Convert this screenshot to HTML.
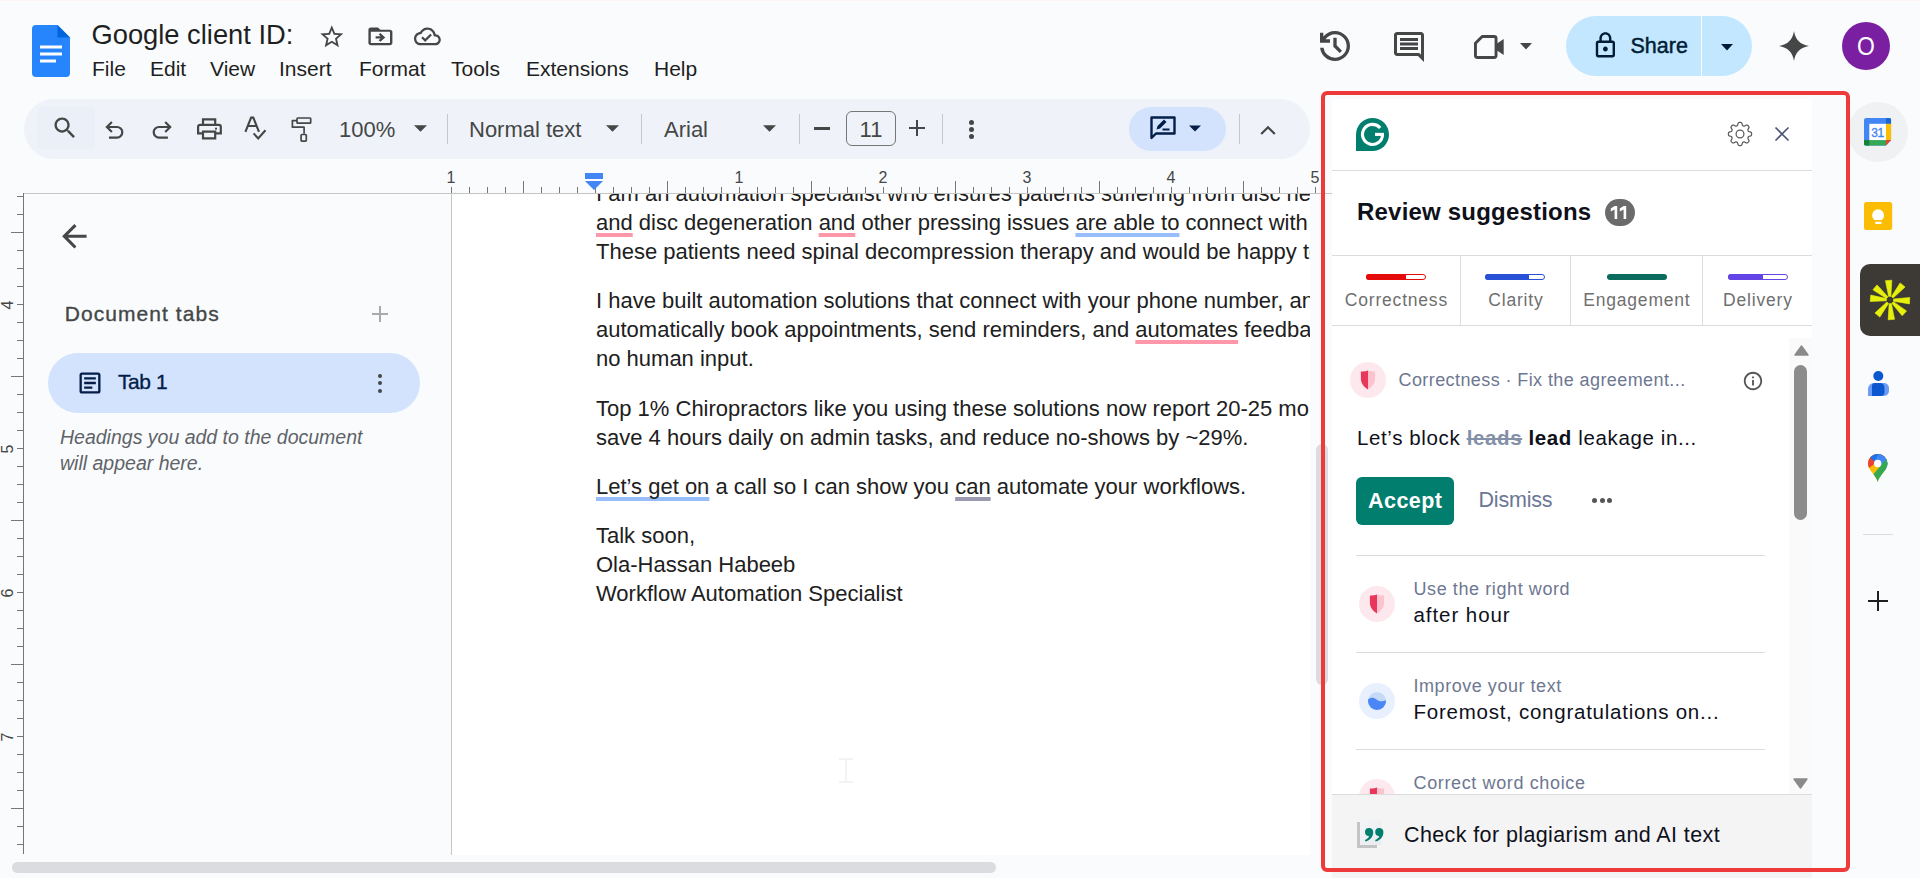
<!DOCTYPE html>
<html><head><meta charset="utf-8">
<style>
*{margin:0;padding:0;box-sizing:border-box}
html,body{width:1920px;height:878px;overflow:hidden;background:#f9fbfd;font-family:"Liberation Sans",sans-serif;color:#1f1f1f}
.a{position:absolute}
.t{position:absolute;white-space:nowrap;line-height:1}
svg{position:absolute;overflow:visible}
.ic{fill:#444746}
.dl{position:absolute;left:144px;white-space:nowrap;line-height:1;font-size:22px;color:#202020;font-family:"Liberation Sans",sans-serif}
.up,.ub,.ug{text-decoration:underline;text-decoration-thickness:3.7px;text-underline-offset:3.4px;text-decoration-skip-ink:none}
.up{text-decoration-color:#ff97aa}.ub{text-decoration-color:#97bdfa}.ug{text-decoration-color:#9a9ab0}
.gtab{position:absolute;top:292.2px;text-align:center;font-size:17.5px;letter-spacing:0.8px;text-indent:0.8px;color:#6f6f6f}
.gsub{font-size:18px;color:#6d7791}
.gmain{font-size:20.5px;color:#0e101a}
</style></head><body>
<div class="a" style="left:0;top:0;width:1920px;height:1px;background:#fdf4f1"></div>

<!-- ===== HEADER ===== -->
<svg style="left:32px;top:25px" width="38" height="52" viewBox="0 0 38 52">
<path d="M4 0h21.5l12.5 12.5v35.5a4 4 0 0 1-4 4H4a4 4 0 0 1-4-4V4a4 4 0 0 1 4-4z" fill="#2684fc"/>
<path d="M25.5 0l12.5 12.5H25.5z" fill="#0066da"/>
<rect x="8" y="20.5" width="22" height="3" fill="#fff"/>
<rect x="8" y="27.5" width="22" height="3" fill="#fff"/>
<rect x="8" y="34.5" width="16" height="3" fill="#fff"/>
</svg>
<div class="t" id="title" style="left:91.5px;top:21.2px;font-size:27.3px;color:#1f1f1f">Google client ID:</div>
<!-- star -->
<svg style="left:318px;top:22.7px" width="27.6" height="27.6" viewBox="0 0 24 24"><path class="ic" d="M22 9.24l-7.19-.62L12 2 9.19 8.63 2 9.24l5.46 4.73L5.82 21 12 17.27 18.18 21l-1.63-7.03L22 9.24zM12 15.4l-3.76 2.27 1-4.28-3.32-2.88 4.38-.38L12 6.1l1.71 4.04 4.38.38-3.32 2.88 1 4.28L12 15.4z"/></svg>
<!-- folder move -->
<svg style="left:365.6px;top:22.6px" width="28.8" height="26.6" viewBox="0 0 24 24" preserveAspectRatio="none"><path class="ic" d="M20 6h-8l-2-2H4c-1.1 0-1.99.9-1.99 2L2 18c0 1.1.9 2 2 2h16c1.1 0 2-.9 2-2V8c0-1.1-.9-2-2-2zm0 12H4V8h16v10zm-7.84-6H8v2h4.16l-1.59 1.59L11.98 17 16 13l-4.02-4-1.41 1.41L12.16 12z"/></svg>
<!-- cloud done -->
<svg style="left:414.4px;top:22.6px" width="26.8" height="26.8" viewBox="0 0 24 24"><path class="ic" d="M19.35 10.04C18.67 6.59 15.64 4 12 4 9.11 4 6.6 5.64 5.35 8.04 2.34 8.36 0 10.91 0 14c0 3.31 2.69 6 6 6h13c2.76 0 5-2.240 5-5 0-2.64-2.05-4.78-4.65-4.96zM19 18H6c-2.21 0-4-1.79-4-4 0-2.05 1.53-3.76 3.56-3.97l1.07-.11.5-.95C8.08 7.14 9.94 6 12 6c2.62 0 4.88 1.86 5.39 4.43l.3 1.5 1.53.11c1.56.1 2.78 1.41 2.780 2.96 0 1.65-1.35 3-3 3zm-9-3.82l-2.09-2.09L6.5 13.5 10 17l6.01-6.01-1.41-1.41z"/></svg>

<!-- menu -->
<div class="t menu" style="left:92px;top:57.6px;font-size:21px">File</div>
<div class="t menu" style="left:150px;top:57.6px;font-size:21px">Edit</div>
<div class="t menu" style="left:210px;top:57.6px;font-size:21px">View</div>
<div class="t menu" style="left:279px;top:57.6px;font-size:21px">Insert</div>
<div class="t menu" style="left:359px;top:57.6px;font-size:21px">Format</div>
<div class="t menu" style="left:451px;top:57.6px;font-size:21px">Tools</div>
<div class="t menu" style="left:526px;top:57.6px;font-size:21px">Extensions</div>
<div class="t menu" style="left:654px;top:57.6px;font-size:21px">Help</div>

<!-- right header icons -->
<!-- history -->
<svg style="left:1315px;top:26px" width="40" height="40" viewBox="0 0 24 24"><path class="ic" d="M12 21c-2.3 0-4.3-.76-6-2.28C4.3 17.2 3.32 15.3 3.05 13H5.1a6.9 6.9 0 0 0 2.3 4.3A6.9 6.9 0 0 0 12 19c1.95 0 3.6-.68 4.96-2.04C18.320 15.6 19 13.95 19 12s-.68-3.6-2.04-4.96C15.6 5.68 13.95 5 12 5a6.7 6.7 0 0 0-3.2.8A7.4 7.4 0 0 0 6.3 8H9v2H3V4h2v2.35a8.7 8.7 0 0 1 3.1-2.47A8.8 8.8 0 0 1 12 3c1.25 0 2.42.24 3.5.71a9.1 9.1 0 0 1 2.86 1.93 9.1 9.1 0 0 1 1.93 2.86c.47 1.08.71 2.25.71 3.5s-.24 2.42-.71 3.5a9.1 9.1 0 0 1-1.930 2.86 9.1 9.1 0 0 1-2.86 1.93A8.8 8.8 0 0 1 12 21zm2.8-4.8L11 12.4V7h2v4.6l3.2 3.2-1.4 1.4z"/></svg>
<!-- comment -->
<svg style="left:1391px;top:29px" width="36" height="36" viewBox="0 0 24 24"><path class="ic" d="M21.99 4c0-1.1-.89-2-1.99-2H4c-1.1 0-2 .9-2 2v12c0 1.1.9 2 2 2h14l4 4-.01-18zM20 4v13.17L18.83 16H4V4h16zM6 12h12v2H6zm0-3h12v2H6zm0-3h12v2H6z"/></svg>
<!-- meet -->
<svg style="left:1474.3px;top:35px" width="30" height="24" viewBox="0 0 30 24"><path fill="none" stroke="#444746" stroke-width="2.9" stroke-linejoin="round" d="M8.2 1.45H20.05a2 2 0 0 1 2 2V20.55a2 2 0 0 1-2 2H3.45a2 2 0 0 1-2-2V8.2z"/><path fill="#444746" d="M23 8.5L29.7 4V20L23 15.5z"/></svg>
<svg style="left:1520px;top:42.5px" width="12" height="7" viewBox="0 0 12 7"><path d="M0 0h12L6 6.5z" fill="#444746"/></svg>

<!-- share -->
<div class="a" style="left:1566px;top:16px;width:186px;height:60px;border-radius:30px;background:#c2e7ff"></div>
<div class="a" style="left:1701px;top:16px;width:1px;height:60px;background:#f9fbfd"></div>
<svg style="left:1590.5px;top:31px" width="28.8" height="28.8" viewBox="0 0 24 24"><path fill="#001d35" d="M18 8h-1V6c0-2.76-2.24-5-5-5S7 3.24 7 6v2H6c-1.1 0-2 .9-2 2v10c0 1.1.9 2 2 2h12c1.1 0 2-.9 2-2V10c0-1.1-.9-2-2-2zM9 6c0-1.66 1.34-3 3-3s3 1.34 3 3v2H9V6zm9 14H6V10h12v10zm-6-3c1.1 0 2-.9 2-2s-.9-2-2-2-2 .9-2 2 .9 2 2 2z"/></svg>
<div class="t" id="share" style="left:1630.5px;top:36px;font-size:21.5px;color:#001d35;-webkit-text-stroke:0.45px #001d35">Share</div>
<svg style="left:1721px;top:43.5px" width="12" height="7" viewBox="0 0 12 7"><path d="M0 0h12L6 6.5z" fill="#001d35"/></svg>
<!-- gemini -->
<svg style="left:1779px;top:31px" width="30" height="30" viewBox="0 0 30 30"><path fill="#444746" d="M15 0C16.2 8.5 21.5 13.8 30 15 21.5 16.2 16.2 21.5 15 30 13.8 21.5 8.5 16.2 0 15 8.5 13.8 13.8 8.5 15 0z"/></svg>
<!-- avatar -->
<div class="a" style="left:1842px;top:22px;width:48px;height:48px;border-radius:24px;background:#7b1fa2"></div>
<div class="t" style="left:1842px;top:33.2px;width:48px;text-align:center;font-size:26px;color:#fff;transform:scaleX(0.88)">O</div>

<!-- ===== RULERS ===== -->
<div class="a" id="page" style="left:452px;top:194px;width:858px;height:661px;background:#fff;overflow:hidden">
<div class="dl" style="top:-11.02px">I am an automation specialist who ensures patients suffering from disc herniation</div>
<div class="dl" style="top:18.08px"><span class="up">and</span> disc degeneration <span class="up">and</span> other pressing issues <span class="ub">are able to</span> connect with you.</div>
<div class="dl" style="top:47.18px">These patients need spinal decompression therapy and would be happy to book</div>
<div class="dl" style="top:96.18px">I have built automation solutions that connect with your phone number, and</div>
<div class="dl" style="top:125.28px">automatically book appointments, send reminders, and <span class="up">automates</span> feedback with</div>
<div class="dl" style="top:154.38px">no human input.</div>
<div class="dl" style="top:203.68px">Top 1% Chiropractors like you using these solutions now report 20-25 more</div>
<div class="dl" style="top:232.78px">save 4 hours daily on admin tasks, and reduce no-shows by ~29%.</div>
<div class="dl" style="top:281.78px"><span class="ub">Let’s get on</span> a call so I can show you <span class="ug">can</span> automate your workflows.</div>
<div class="dl" style="top:330.68px">Talk soon,</div>
<div class="dl" style="top:359.78px">Ola-Hassan Habeeb</div>
<div class="dl" style="top:388.88px">Workflow Automation Specialist</div>
</div>
<div class="a" style="left:451px;top:194px;width:1px;height:661px;background:#c4c7c5"></div>
<div class="a" style="left:23px;top:193px;width:1309px;height:1px;background:#c4c7c5"></div>
<div class="a" style="left:451px;top:187px;width:1px;height:6px;background:#747775"></div>
<div class="a" style="left:469px;top:187px;width:1px;height:6px;background:#747775"></div>
<div class="a" style="left:487px;top:187px;width:1px;height:6px;background:#747775"></div>
<div class="a" style="left:505px;top:187px;width:1px;height:6px;background:#747775"></div>
<div class="a" style="left:523px;top:181px;width:1px;height:12px;background:#747775"></div>
<div class="a" style="left:541px;top:187px;width:1px;height:6px;background:#747775"></div>
<div class="a" style="left:559px;top:187px;width:1px;height:6px;background:#747775"></div>
<div class="a" style="left:577px;top:187px;width:1px;height:6px;background:#747775"></div>
<div class="a" style="left:595px;top:187px;width:1px;height:6px;background:#747775"></div>
<div class="a" style="left:613px;top:187px;width:1px;height:6px;background:#747775"></div>
<div class="a" style="left:631px;top:187px;width:1px;height:6px;background:#747775"></div>
<div class="a" style="left:649px;top:187px;width:1px;height:6px;background:#747775"></div>
<div class="a" style="left:667px;top:181px;width:1px;height:12px;background:#747775"></div>
<div class="a" style="left:685px;top:187px;width:1px;height:6px;background:#747775"></div>
<div class="a" style="left:703px;top:187px;width:1px;height:6px;background:#747775"></div>
<div class="a" style="left:721px;top:187px;width:1px;height:6px;background:#747775"></div>
<div class="a" style="left:739px;top:187px;width:1px;height:6px;background:#747775"></div>
<div class="a" style="left:757px;top:187px;width:1px;height:6px;background:#747775"></div>
<div class="a" style="left:775px;top:187px;width:1px;height:6px;background:#747775"></div>
<div class="a" style="left:793px;top:187px;width:1px;height:6px;background:#747775"></div>
<div class="a" style="left:811px;top:181px;width:1px;height:12px;background:#747775"></div>
<div class="a" style="left:829px;top:187px;width:1px;height:6px;background:#747775"></div>
<div class="a" style="left:847px;top:187px;width:1px;height:6px;background:#747775"></div>
<div class="a" style="left:865px;top:187px;width:1px;height:6px;background:#747775"></div>
<div class="a" style="left:883px;top:187px;width:1px;height:6px;background:#747775"></div>
<div class="a" style="left:901px;top:187px;width:1px;height:6px;background:#747775"></div>
<div class="a" style="left:919px;top:187px;width:1px;height:6px;background:#747775"></div>
<div class="a" style="left:937px;top:187px;width:1px;height:6px;background:#747775"></div>
<div class="a" style="left:955px;top:181px;width:1px;height:12px;background:#747775"></div>
<div class="a" style="left:973px;top:187px;width:1px;height:6px;background:#747775"></div>
<div class="a" style="left:991px;top:187px;width:1px;height:6px;background:#747775"></div>
<div class="a" style="left:1009px;top:187px;width:1px;height:6px;background:#747775"></div>
<div class="a" style="left:1027px;top:187px;width:1px;height:6px;background:#747775"></div>
<div class="a" style="left:1045px;top:187px;width:1px;height:6px;background:#747775"></div>
<div class="a" style="left:1063px;top:187px;width:1px;height:6px;background:#747775"></div>
<div class="a" style="left:1081px;top:187px;width:1px;height:6px;background:#747775"></div>
<div class="a" style="left:1099px;top:181px;width:1px;height:12px;background:#747775"></div>
<div class="a" style="left:1117px;top:187px;width:1px;height:6px;background:#747775"></div>
<div class="a" style="left:1135px;top:187px;width:1px;height:6px;background:#747775"></div>
<div class="a" style="left:1153px;top:187px;width:1px;height:6px;background:#747775"></div>
<div class="a" style="left:1171px;top:187px;width:1px;height:6px;background:#747775"></div>
<div class="a" style="left:1189px;top:187px;width:1px;height:6px;background:#747775"></div>
<div class="a" style="left:1207px;top:187px;width:1px;height:6px;background:#747775"></div>
<div class="a" style="left:1225px;top:187px;width:1px;height:6px;background:#747775"></div>
<div class="a" style="left:1243px;top:181px;width:1px;height:12px;background:#747775"></div>
<div class="a" style="left:1261px;top:187px;width:1px;height:6px;background:#747775"></div>
<div class="a" style="left:1279px;top:187px;width:1px;height:6px;background:#747775"></div>
<div class="a" style="left:1297px;top:187px;width:1px;height:6px;background:#747775"></div>
<div class="a" style="left:1315px;top:187px;width:1px;height:6px;background:#747775"></div>
<div class="t rl" style="left:436px;top:170.2px;width:30px;text-align:center;font-size:16px;color:#444746">1</div>
<div class="t rl" style="left:724px;top:170.2px;width:30px;text-align:center;font-size:16px;color:#444746">1</div>
<div class="t rl" style="left:868px;top:170.2px;width:30px;text-align:center;font-size:16px;color:#444746">2</div>
<div class="t rl" style="left:1012px;top:170.2px;width:30px;text-align:center;font-size:16px;color:#444746">3</div>
<div class="t rl" style="left:1156px;top:170.2px;width:30px;text-align:center;font-size:16px;color:#444746">4</div>
<div class="t rl" style="left:1300px;top:170.2px;width:30px;text-align:center;font-size:16px;color:#444746">5</div>
<div class="a" style="left:23px;top:193px;width:1px;height:661px;background:#747775"></div>
<div class="a" style="left:17px;top:196px;width:6px;height:1px;background:#747775"></div>
<div class="a" style="left:17px;top:214px;width:6px;height:1px;background:#747775"></div>
<div class="a" style="left:11px;top:232px;width:12px;height:1px;background:#747775"></div>
<div class="a" style="left:17px;top:250px;width:6px;height:1px;background:#747775"></div>
<div class="a" style="left:17px;top:268px;width:6px;height:1px;background:#747775"></div>
<div class="a" style="left:17px;top:286px;width:6px;height:1px;background:#747775"></div>
<div class="a" style="left:17px;top:304px;width:6px;height:1px;background:#747775"></div>
<div class="a" style="left:17px;top:322px;width:6px;height:1px;background:#747775"></div>
<div class="a" style="left:17px;top:340px;width:6px;height:1px;background:#747775"></div>
<div class="a" style="left:17px;top:358px;width:6px;height:1px;background:#747775"></div>
<div class="a" style="left:11px;top:376px;width:12px;height:1px;background:#747775"></div>
<div class="a" style="left:17px;top:394px;width:6px;height:1px;background:#747775"></div>
<div class="a" style="left:17px;top:412px;width:6px;height:1px;background:#747775"></div>
<div class="a" style="left:17px;top:430px;width:6px;height:1px;background:#747775"></div>
<div class="a" style="left:17px;top:448px;width:6px;height:1px;background:#747775"></div>
<div class="a" style="left:17px;top:466px;width:6px;height:1px;background:#747775"></div>
<div class="a" style="left:17px;top:484px;width:6px;height:1px;background:#747775"></div>
<div class="a" style="left:17px;top:502px;width:6px;height:1px;background:#747775"></div>
<div class="a" style="left:11px;top:520px;width:12px;height:1px;background:#747775"></div>
<div class="a" style="left:17px;top:538px;width:6px;height:1px;background:#747775"></div>
<div class="a" style="left:17px;top:556px;width:6px;height:1px;background:#747775"></div>
<div class="a" style="left:17px;top:574px;width:6px;height:1px;background:#747775"></div>
<div class="a" style="left:17px;top:592px;width:6px;height:1px;background:#747775"></div>
<div class="a" style="left:17px;top:610px;width:6px;height:1px;background:#747775"></div>
<div class="a" style="left:17px;top:628px;width:6px;height:1px;background:#747775"></div>
<div class="a" style="left:17px;top:646px;width:6px;height:1px;background:#747775"></div>
<div class="a" style="left:11px;top:664px;width:12px;height:1px;background:#747775"></div>
<div class="a" style="left:17px;top:682px;width:6px;height:1px;background:#747775"></div>
<div class="a" style="left:17px;top:700px;width:6px;height:1px;background:#747775"></div>
<div class="a" style="left:17px;top:718px;width:6px;height:1px;background:#747775"></div>
<div class="a" style="left:17px;top:736px;width:6px;height:1px;background:#747775"></div>
<div class="a" style="left:17px;top:754px;width:6px;height:1px;background:#747775"></div>
<div class="a" style="left:17px;top:772px;width:6px;height:1px;background:#747775"></div>
<div class="a" style="left:17px;top:790px;width:6px;height:1px;background:#747775"></div>
<div class="a" style="left:11px;top:808px;width:12px;height:1px;background:#747775"></div>
<div class="a" style="left:17px;top:826px;width:6px;height:1px;background:#747775"></div>
<div class="a" style="left:17px;top:844px;width:6px;height:1px;background:#747775"></div>
<div class="t rl" style="left:-7px;top:297px;width:30px;height:16px;text-align:center;font-size:16px;color:#444746;transform:rotate(-90deg)">4</div>
<div class="t rl" style="left:-7px;top:441px;width:30px;height:16px;text-align:center;font-size:16px;color:#444746;transform:rotate(-90deg)">5</div>
<div class="t rl" style="left:-7px;top:585px;width:30px;height:16px;text-align:center;font-size:16px;color:#444746;transform:rotate(-90deg)">6</div>
<div class="t rl" style="left:-7px;top:729px;width:30px;height:16px;text-align:center;font-size:16px;color:#444746;transform:rotate(-90deg)">7</div>
<div class="a" style="left:585px;top:173px;width:18px;height:5.5px;background:#4285f4"></div>
<svg style="left:585px;top:181px" width="18" height="9" viewBox="0 0 18 9"><path d="M0 0h18L9 9z" fill="#4285f4"/></svg>
<!-- ===== LEFT SIDEBAR ===== -->
<svg style="left:55.8px;top:218.3px" width="36.7" height="36.7" viewBox="0 0 24 24"><path class="ic" d="M20 11H7.83l5.59-5.59L12 4l-8 8 8 8 1.41-1.41L7.83 13H20v-2z"/></svg>
<div class="t" id="doctabs" style="left:64.8px;top:303px;font-size:21px;letter-spacing:1.05px;color:#444746;-webkit-text-stroke:0.35px #444746">Document tabs</div>
<div class="a" style="left:372px;top:313.2px;width:16px;height:1.8px;background:#a8abae"></div>
<div class="a" style="left:379.1px;top:306px;width:1.8px;height:16px;background:#a8abae"></div>
<div class="a" style="left:48px;top:352.8px;width:372px;height:60px;border-radius:30px;background:#d3e3fd"></div>
<svg style="left:76px;top:369.1px" width="28" height="28" viewBox="0 0 24 24"><path fill="#041e49" d="M19 5v14H5V5h14m0-2H5c-1.1 0-2 .9-2 2v14c0 1.1.9 2 2 2h14c1.1 0 2-.9 2-2V5c0-1.1-.9-2-2-2zM14 17H7v-2h7v2zm3-4H7v-2h10v2zm0-4H7V7h10v2z"/></svg>
<div class="t" id="tab1" style="left:118px;top:371.2px;font-size:21px;letter-spacing:-0.45px;color:#041e49;-webkit-text-stroke:0.35px #041e49">Tab 1</div>
<div class="a" style="left:377.5px;top:373.5px;width:4px;height:4px;border-radius:50%;background:#444746"></div>
<div class="a" style="left:377.5px;top:381px;width:4px;height:4px;border-radius:50%;background:#444746"></div>
<div class="a" style="left:377.5px;top:388.5px;width:4px;height:4px;border-radius:50%;background:#444746"></div>
<div class="t" id="head1" style="left:60px;top:428px;font-size:19.5px;font-style:italic;color:#5f6368">Headings you add to the document</div>
<div class="t" id="head2" style="left:60px;top:453.6px;font-size:19.5px;font-style:italic;color:#5f6368">will appear here.</div>
<!-- ===== TOOLBAR ===== -->
<div class="a" style="left:24px;top:99px;width:1286px;height:60px;border-radius:30px;background:#eff3f9"></div>
<div class="a" style="left:38px;top:107px;width:57px;height:42px;background:#ebf0f8;border-radius:2px"></div>


<!-- search -->
<svg style="left:50.5px;top:113.5px" width="28" height="28" viewBox="0 0 24 24"><path class="ic" d="M15.5 14h-.79l-.28-.27C15.41 12.59 16 11.11 16 9.5 16 5.91 13.09 3 9.5 3S3 5.91 3 9.5 5.91 16 9.5 16c1.61 0 3.09-.59 4.23-1.57l.27.28v.79l5 4.99L20.49 19l-4.99-5zm-6 0C7.01 14 5 11.99 5 9.5S7.01 5 9.5 5 14 7.01 14 9.5 11.99 14 9.5 14z"/></svg>
<!-- undo -->
<svg style="left:104px;top:120px" width="22" height="22" viewBox="0 0 22 22"><path fill="none" stroke="#444746" stroke-width="2.2" stroke-linejoin="miter" d="M7.9 2L2.9 7 7.9 12M2.9 7H13A5.3 5.3 0 0 1 13 17.6H5"/></svg>
<!-- redo -->
<svg style="left:150px;top:120px" width="22" height="22" viewBox="0 0 22 22"><path fill="none" stroke="#444746" stroke-width="2.2" stroke-linejoin="miter" d="M15.2 2L20.2 7 15.2 12M20.2 7H9A5.3 5.3 0 0 0 9 17.6H17.9"/></svg>
<!-- print -->
<svg style="left:196px;top:117px" width="26" height="24" viewBox="0 0 26 24"><g fill="none" stroke="#444746" stroke-width="2.2" stroke-linejoin="miter"><path d="M7 7.8V2.4H19.2V7.8"/><path d="M7 16.3H2.1V9.8a2 2 0 0 1 2-2H22.8a2 2 0 0 1 2 2V16.3H19.2"/><path d="M7 14.7H19.2V21.3H7z"/></g><circle cx="20" cy="11.7" r="1.1" fill="#444746"/></svg>
<!-- spellcheck -->
<svg style="left:244px;top:115px" width="24" height="26" viewBox="0 0 24 26"><path fill="none" stroke="#444746" stroke-width="2.1" d="M1.4 16.8L7.1 2.6H9.3L15 16.8M4.2 11h8M9.6 18.4l4.6 5 7.3-8.2"/></svg>
<!-- paint format -->
<svg style="left:290px;top:116px" width="23" height="27" viewBox="0 0 23 27"><g fill="none" stroke="#444746" stroke-width="1.7" stroke-linejoin="round"><rect x="7" y="2" width="13.7" height="5.2" rx="0.8"/><path d="M7 4.6H2.4V11.2H14.1V17.7"/><rect x="11.1" y="18.5" width="5.2" height="6.6" rx="0.8"/></g></svg>

<div class="t" id="zoom" style="left:339px;top:118.5px;font-size:22px;color:#444746">100%</div>
<svg style="left:414px;top:125px" width="13" height="7" viewBox="0 0 12 6"><path d="M0 0h12L6 6z" fill="#444746"/></svg>
<div class="a" style="left:446.5px;top:114px;width:1px;height:30px;background:#c7c7c7"></div>
<div class="t" id="normal" style="left:469px;top:118.5px;font-size:22px;color:#444746">Normal text</div>
<svg style="left:606px;top:125px" width="13" height="7" viewBox="0 0 12 6"><path d="M0 0h12L6 6z" fill="#444746"/></svg>
<div class="a" style="left:641px;top:114px;width:1px;height:30px;background:#c7c7c7"></div>
<div class="t" id="arial" style="left:664px;top:118.5px;font-size:22px;color:#444746">Arial</div>
<svg style="left:763px;top:125px" width="13" height="7" viewBox="0 0 12 6"><path d="M0 0h12L6 6z" fill="#444746"/></svg>
<div class="a" style="left:798.5px;top:114px;width:1px;height:30px;background:#c7c7c7"></div>
<div class="a" style="left:814px;top:127px;width:16px;height:2.5px;background:#444746"></div>
<div class="a" style="left:846px;top:111px;width:50px;height:35px;border:1.5px solid #747775;border-radius:6px"></div>
<div class="t" id="fs11" style="left:846px;top:118.5px;width:50px;text-align:center;font-size:22px;color:#444746">11</div>
<div class="a" style="left:909px;top:126.7px;width:16px;height:2.6px;background:#444746"></div>
<div class="a" style="left:915.7px;top:120px;width:2.6px;height:16px;background:#444746"></div>
<div class="a" style="left:941.5px;top:114px;width:1px;height:30px;background:#c7c7c7"></div>
<div class="a" style="left:969px;top:119.5px;width:5px;height:5px;border-radius:50%;background:#444746"></div>
<div class="a" style="left:969px;top:126.5px;width:5px;height:5px;border-radius:50%;background:#444746"></div>
<div class="a" style="left:969px;top:133.5px;width:5px;height:5px;border-radius:50%;background:#444746"></div>
<!-- mode pill -->
<div class="a" style="left:1129px;top:107px;width:97px;height:44px;border-radius:22px;background:#d3e3fd"></div>
<svg style="left:1150px;top:116px" width="26" height="24" viewBox="0 0 26 24"><path fill="none" stroke="#041e49" stroke-width="2.4" stroke-linejoin="round" d="M1.5 1.5h23v16H6L1.5 22z"/><path fill="#041e49" d="M6.5 13.5l1-3.5 6.5-6.5 2.5 2.5-6.5 6.5zM12.5 12.5h7v2h-7z"/></svg>
<svg style="left:1189px;top:125px" width="12" height="7" viewBox="0 0 12 6"><path d="M0 0h12L6 6z" fill="#041e49"/></svg>
<div class="a" style="left:1239px;top:114px;width:1px;height:30px;background:#c7c7c7"></div>
<svg style="left:1259px;top:123px" width="18" height="14" viewBox="0 0 18 14"><path fill="none" stroke="#444746" stroke-width="2.2" d="M2.2 11L9 4.2 15.8 11"/></svg>
<!-- ===== RIGHT APPS BAR ===== -->
<div class="a" style="left:1848px;top:102px;width:60px;height:60px;border-radius:50%;background:#eff1f3"></div>
<svg style="left:1864px;top:118.2px" width="27.25" height="27.7" viewBox="0 0 27.25 27.7"><defs><clipPath id="calc"><path d="M2.5 0H24.75A2.5 2.5 0 0 1 27.25 2.5V22.1L21.95 27.7H2.5A2.5 2.5 0 0 1 0 25.2V2.5A2.5 2.5 0 0 1 2.5 0z"/></clipPath></defs><g clip-path="url(#calc)"><rect width="27.25" height="27.7" fill="#4285f4"/><rect x="22" y="0" width="5.25" height="5.8" fill="#1967d2"/><rect x="22" y="5.8" width="5.25" height="16.3" fill="#fbbc04"/><rect x="0" y="22.1" width="22" height="5.6" fill="#34a853"/><rect x="0" y="22.1" width="5.3" height="5.6" fill="#188038"/><path d="M22 22.1H27.25L22 27.7z" fill="#ea4335"/><rect x="5.3" y="5.8" width="16.7" height="16.3" fill="#fff"/></g><text x="13.6" y="18.6" text-anchor="middle" font-family="Liberation Sans" font-size="12" fill="#4285f4" letter-spacing="-0.3" stroke="#4285f4" stroke-width="0.35">31</text></svg>
<svg style="left:1863.7px;top:202px" width="28.2" height="28" viewBox="0 0 28.2 28"><rect width="28.2" height="28" rx="2.5" fill="#fbbc04"/><path d="M10.3 18A6 6 0 1 1 17.9 18z" fill="#fff"/><rect x="11.3" y="19.7" width="6.2" height="2.3" fill="#fff"/></svg>
<div class="a" style="left:1860px;top:264px;width:70px;height:72px;border-radius:10px;background:#3d3a36"></div>
<svg style="left:1862px;top:272px" width="56" height="56" viewBox="-28 -28 56 56"><g fill="#e6f00a" stroke="#e6f00a" stroke-width="0.6" stroke-linejoin="round"><path d="M-1.1 -3.6L-3.2 -19.6 3.2 -19.6 1.1 -3.6z" transform="rotate(-4)"/><path d="M-1.1 -3.6L-3.2 -19.6 3.2 -19.6 1.1 -3.6z" transform="rotate(40)"/><path d="M-1.1 -3.6L-3.2 -19.6 3.2 -19.6 1.1 -3.6z" transform="rotate(92)"/><path d="M-1.1 -3.6L-3.2 -19.6 3.2 -19.6 1.1 -3.6z" transform="rotate(133)"/><path d="M-1.1 -3.6L-3.2 -19.6 3.2 -19.6 1.1 -3.6z" transform="rotate(176)"/><path d="M-1.1 -3.6L-3.2 -19.6 3.2 -19.6 1.1 -3.6z" transform="rotate(220)"/><path d="M-1.1 -3.6L-3.2 -19.6 3.2 -19.6 1.1 -3.6z" transform="rotate(275)"/><path d="M-1.1 -3.6L-3.2 -19.6 3.2 -19.6 1.1 -3.6z" transform="rotate(310)"/></g></svg>
<svg style="left:1867.7px;top:371px" width="21" height="25" viewBox="0 0 21 25"><circle cx="10.3" cy="5" r="5" fill="#0b57d0"/><path d="M0 25V18a6 6 0 0 1 6-6H16a5 5 0 0 1 5 5V20a5 5 0 0 1-5 5z" fill="#6c9bf7"/><path d="M4 25V15a3 3 0 0 1 3-3H12a4.5 4.5 0 0 1 4.5 4.5V21a4 4 0 0 1-4 4z" fill="#0b57d0"/></svg>
<svg style="left:1868.3px;top:454px" width="19.4" height="28" viewBox="0 0 19.4 28"><defs><clipPath id="pinc"><path d="M9.7 0C4.3 0 0 4.3 0 9.6c0 2.6 1 4.6 2.4 6.6L6 21c1.6 2.2 3 4.3 3.7 7c.7-2.7 2.1-4.8 3.7-7l3.6-4.8c1.4-2 2.4-4 2.4-6.6C19.4 4.3 15.1 0 9.7 0z"/></clipPath><clipPath id="pina"><path d="M-10.8 -7L24 21.8 30 -10H-10.8z"/></clipPath></defs><g clip-path="url(#pinc)"><rect x="-1" y="-1" width="22" height="30" fill="#fbbc04"/><path d="M-11.1 22.3L24.3 -2.3V-10H-11.1z" fill="#ea4335"/><g clip-path="url(#pina)"><rect x="-1" y="-1" width="22" height="30" fill="#1a73e8"/><path d="M17.4 -12.3L3 13.3H30V-12.3z" fill="#4285f4"/></g><path d="M30.2 -9L-6.7 34.8H30z" fill="#34a853"/></g><circle cx="9.7" cy="9.5" r="3.7" fill="#fff"/></svg>
<div class="a" style="left:1863px;top:534px;width:30px;height:1px;background:#dadce0"></div>
<div class="a" style="left:1868px;top:599.8px;width:20px;height:2.4px;background:#1f1f1f"></div>
<div class="a" style="left:1876.8px;top:591px;width:2.4px;height:20px;background:#1f1f1f"></div>

<!-- scrollbars -->
<div class="a" style="left:0;top:855px;width:1320px;height:23px;background:#f9fbfd"></div>
<div class="a" style="left:12px;top:861.5px;width:984px;height:11.5px;border-radius:6px;background:#dadce0"></div>
<div class="a" style="left:1316px;top:444px;width:11.5px;height:241px;border-radius:6px;background:#dadce0"></div>
<!-- I-beam -->
<svg style="left:838px;top:758px" width="16" height="25" viewBox="0 0 16 25"><path d="M1 1h6l1 1 1-1h6M8 2v21M1 24h6l1-1 1 1h6" fill="none" stroke="#f0f0f0" stroke-width="1.6"/></svg>
<!-- ===== GRAMMARLY PANEL ===== -->
<div class="a" style="left:1332px;top:99px;width:480px;height:779px;background:#fff"></div>
<svg style="left:1356px;top:118px" width="33" height="33" viewBox="0 0 33 33"><path d="M0 16.5A16.5 16.5 0 1 1 16.5 33H0z" fill="#027e6f"/><path d="M24.16 9.97A10 10 0 1 0 26.5 16.4" fill="none" stroke="#fff" stroke-width="3.1"/><path d="M19 16.4H28" stroke="#fff" stroke-width="3.1"/></svg>
<svg style="left:1728px;top:122px" width="24" height="24" viewBox="0 0 24 24"><path fill="none" stroke="#5a5a5a" stroke-width="1.25" stroke-linejoin="round" d="M12.00 0.40 L12.23 0.41 L12.45 0.43 L12.68 0.46 L12.90 0.50 L13.13 0.57 L13.34 0.68 L13.54 0.83 L13.73 1.05 L13.90 1.35 L14.04 1.73 L14.16 2.15 L14.27 2.56 L14.37 2.91 L14.48 3.19 L14.61 3.41 L14.74 3.57 L14.88 3.69 L15.03 3.79 L15.18 3.87 L15.34 3.94 L15.50 4.00 L15.66 4.05 L15.84 4.09 L16.03 4.10 L16.23 4.08 L16.47 4.02 L16.75 3.90 L17.07 3.72 L17.44 3.51 L17.82 3.29 L18.18 3.13 L18.52 3.03 L18.81 3.01 L19.06 3.05 L19.28 3.12 L19.49 3.23 L19.68 3.36 L19.86 3.49 L20.03 3.64 L20.20 3.80 L20.36 3.97 L20.51 4.14 L20.64 4.32 L20.77 4.51 L20.88 4.72 L20.95 4.94 L20.99 5.19 L20.97 5.48 L20.87 5.82 L20.71 6.18 L20.49 6.56 L20.28 6.93 L20.10 7.25 L19.98 7.53 L19.92 7.77 L19.90 7.97 L19.91 8.16 L19.95 8.34 L20.00 8.50 L20.06 8.66 L20.13 8.82 L20.21 8.97 L20.31 9.12 L20.43 9.26 L20.59 9.39 L20.81 9.52 L21.09 9.63 L21.44 9.73 L21.85 9.84 L22.27 9.96 L22.65 10.10 L22.95 10.27 L23.17 10.46 L23.32 10.66 L23.43 10.87 L23.50 11.10 L23.54 11.32 L23.57 11.55 L23.59 11.77 L23.60 12.00 L23.59 12.23 L23.57 12.45 L23.54 12.68 L23.50 12.90 L23.43 13.13 L23.32 13.34 L23.17 13.54 L22.95 13.73 L22.65 13.90 L22.27 14.04 L21.85 14.16 L21.44 14.27 L21.09 14.37 L20.81 14.48 L20.59 14.61 L20.43 14.74 L20.31 14.88 L20.21 15.03 L20.13 15.18 L20.06 15.34 L20.00 15.50 L19.95 15.66 L19.91 15.84 L19.90 16.03 L19.92 16.23 L19.98 16.47 L20.10 16.75 L20.28 17.07 L20.49 17.44 L20.71 17.82 L20.87 18.18 L20.97 18.52 L20.99 18.81 L20.95 19.06 L20.88 19.28 L20.77 19.49 L20.64 19.68 L20.51 19.86 L20.36 20.03 L20.20 20.20 L20.03 20.36 L19.86 20.51 L19.68 20.64 L19.49 20.77 L19.28 20.88 L19.06 20.95 L18.81 20.99 L18.52 20.97 L18.18 20.87 L17.82 20.71 L17.44 20.49 L17.07 20.28 L16.75 20.10 L16.47 19.98 L16.23 19.92 L16.03 19.90 L15.84 19.91 L15.66 19.95 L15.50 20.00 L15.34 20.06 L15.18 20.13 L15.03 20.21 L14.88 20.31 L14.74 20.43 L14.61 20.59 L14.48 20.81 L14.37 21.09 L14.27 21.44 L14.16 21.85 L14.04 22.27 L13.90 22.65 L13.73 22.95 L13.54 23.17 L13.34 23.32 L13.13 23.43 L12.90 23.50 L12.68 23.54 L12.45 23.57 L12.23 23.59 L12.00 23.60 L11.77 23.59 L11.55 23.57 L11.32 23.54 L11.10 23.50 L10.87 23.43 L10.66 23.32 L10.46 23.17 L10.27 22.95 L10.10 22.65 L9.96 22.27 L9.84 21.85 L9.73 21.44 L9.63 21.09 L9.52 20.81 L9.39 20.59 L9.26 20.43 L9.12 20.31 L8.97 20.21 L8.82 20.13 L8.66 20.06 L8.50 20.00 L8.34 19.95 L8.16 19.91 L7.97 19.90 L7.77 19.92 L7.53 19.98 L7.25 20.10 L6.93 20.28 L6.56 20.49 L6.18 20.71 L5.82 20.87 L5.48 20.97 L5.19 20.99 L4.94 20.95 L4.72 20.88 L4.51 20.77 L4.32 20.64 L4.14 20.51 L3.97 20.36 L3.80 20.20 L3.64 20.03 L3.49 19.86 L3.36 19.68 L3.23 19.49 L3.12 19.28 L3.05 19.06 L3.01 18.81 L3.03 18.52 L3.13 18.18 L3.29 17.82 L3.51 17.44 L3.72 17.07 L3.90 16.75 L4.02 16.47 L4.08 16.23 L4.10 16.03 L4.09 15.84 L4.05 15.66 L4.00 15.50 L3.94 15.34 L3.87 15.18 L3.79 15.03 L3.69 14.88 L3.57 14.74 L3.41 14.61 L3.19 14.48 L2.91 14.37 L2.56 14.27 L2.15 14.16 L1.73 14.04 L1.35 13.90 L1.05 13.73 L0.83 13.54 L0.68 13.34 L0.57 13.13 L0.50 12.90 L0.46 12.68 L0.43 12.45 L0.41 12.23 L0.40 12.00 L0.41 11.77 L0.43 11.55 L0.46 11.32 L0.50 11.10 L0.57 10.87 L0.68 10.66 L0.83 10.46 L1.05 10.27 L1.35 10.10 L1.73 9.96 L2.15 9.84 L2.56 9.73 L2.91 9.63 L3.19 9.52 L3.41 9.39 L3.57 9.26 L3.69 9.12 L3.79 8.97 L3.87 8.82 L3.94 8.66 L4.00 8.50 L4.05 8.34 L4.09 8.16 L4.10 7.97 L4.08 7.77 L4.02 7.53 L3.90 7.25 L3.72 6.93 L3.51 6.56 L3.29 6.18 L3.13 5.82 L3.03 5.48 L3.01 5.19 L3.05 4.94 L3.12 4.72 L3.23 4.51 L3.36 4.32 L3.49 4.14 L3.64 3.97 L3.80 3.80 L3.97 3.64 L4.14 3.49 L4.32 3.36 L4.51 3.23 L4.72 3.12 L4.94 3.05 L5.19 3.01 L5.48 3.03 L5.82 3.13 L6.18 3.29 L6.56 3.51 L6.93 3.72 L7.25 3.90 L7.53 4.02 L7.77 4.08 L7.97 4.10 L8.16 4.09 L8.34 4.05 L8.50 4.00 L8.66 3.94 L8.82 3.87 L8.97 3.79 L9.12 3.69 L9.26 3.57 L9.39 3.41 L9.52 3.19 L9.63 2.91 L9.73 2.56 L9.84 2.15 L9.96 1.73 L10.10 1.35 L10.27 1.05 L10.46 0.83 L10.66 0.68 L10.87 0.57 L11.10 0.50 L11.32 0.46 L11.55 0.43 L11.77 0.41z"/><circle cx="12" cy="12" r="3.9" fill="none" stroke="#5a5a5a" stroke-width="1.25"/></svg>
<svg style="left:1775px;top:127px" width="14" height="14" viewBox="0 0 14 14"><path d="M0.5 0.5l13 13M13.5 0.5l-13 13" stroke="#4a5578" stroke-width="1.6"/></svg>
<div class="a" style="left:1332px;top:170px;width:480px;height:1px;background:#dcdcdc"></div>
<div class="t" id="review" style="left:1357px;top:200.3px;font-size:24px;font-weight:bold;letter-spacing:0.2px;color:#0e101a">Review suggestions</div>
<div class="a" style="left:1605px;top:199px;width:30px;height:27px;border-radius:13.5px;background:#6b6b6b"></div>
<svg style="left:1610px;top:206px" width="17" height="13" viewBox="0 0 17 13"><path fill="#fff" d="M0.8 2.6L4.6 0H7.2V13H4.6V3.4L0.8 5.4z"/><path fill="#fff" transform="translate(9 0)" d="M0.8 2.6L4.6 0H7.2V13H4.6V3.4L0.8 5.4z"/></svg>
<!-- tabs -->
<div class="a" style="left:1332px;top:255px;width:480px;height:1px;background:#dcdcdc"></div>
<div class="a" style="left:1332px;top:325px;width:480px;height:1px;background:#dcdcdc"></div>
<div class="a" style="left:1460px;top:255px;width:1px;height:70px;background:#dcdcdc"></div>
<div class="a" style="left:1570px;top:255px;width:1px;height:70px;background:#dcdcdc"></div>
<div class="a" style="left:1702px;top:255px;width:1px;height:70px;background:#dcdcdc"></div>
<div class="a" style="left:1366px;top:274px;width:60px;height:6px;border-radius:3px;border:1.3px solid #e60b0b;background:#fff"></div>
<div class="a" style="left:1366px;top:274px;width:40px;height:6px;border-radius:3px 0 0 3px;background:#e60b0b"></div>
<div class="a" style="left:1485px;top:274px;width:60px;height:6px;border-radius:3px;border:1.3px solid #2851d8;background:#fff"></div>
<div class="a" style="left:1485px;top:274px;width:44px;height:6px;border-radius:3px 0 0 3px;background:#2851d8"></div>
<div class="a" style="left:1607px;top:274px;width:60px;height:6px;border-radius:3px;background:#0b6b5c"></div>
<div class="a" style="left:1728px;top:274px;width:60px;height:6px;border-radius:3px;border:1.3px solid #6344e6;background:#fff"></div>
<div class="a" style="left:1728px;top:274px;width:35px;height:6px;border-radius:3px 0 0 3px;background:#6344e6"></div>
<div class="t gtab" style="left:1332px;width:128px">Correctness</div>
<div class="t gtab" style="left:1461px;width:109px">Clarity</div>
<div class="t gtab" style="left:1571px;width:131px">Engagement</div>
<div class="t gtab" style="left:1703px;width:109px">Delivery</div>
<!-- list gutter -->
<div class="a" style="left:1789px;top:338px;width:23px;height:456px;background:#fafafa"></div>
<svg style="left:1793.5px;top:344.5px" width="15" height="11" viewBox="0 0 15 11"><path d="M7.5 1L14 10H1z" fill="#8a8a8a" stroke="#8a8a8a" stroke-width="1.4" stroke-linejoin="round"/></svg>
<div class="a" style="left:1794px;top:365px;width:13px;height:155px;border-radius:6.5px;background:#8c8c8c"></div>
<svg style="left:1793px;top:777.5px" width="15" height="11" viewBox="0 0 15 11"><path d="M1 1H14L7.5 10z" fill="#8a8a8a" stroke="#8a8a8a" stroke-width="1.4" stroke-linejoin="round"/></svg>
<!-- card 1 -->
<div class="a" style="left:1350px;top:362px;width:36px;height:36px;border-radius:50%;background:#fde9ed"></div>
<svg style="left:1360px;top:370px" width="16" height="20" viewBox="0 0 18 22"><path d="M9 0.3Q5 1.8 1 1.3V9.5C1 14.5 4.5 19 9 21.7z" fill="#e8375a"/><path d="M9 0.3Q13 1.8 17 1.3V9.5C17 14.5 13.5 19 9 21.7z" fill="#fcc3cf"/></svg>
<div class="t gsub" id="corrfix" style="left:1398.5px;top:371px;letter-spacing:0.41px">Correctness · Fix the agreement...</div>
<svg style="left:1742px;top:370px" width="22" height="22" viewBox="0 0 24 24"><path fill="#555" d="M11 7h2v2h-2zm0 4h2v6h-2zm1-9C6.48 2 2 6.48 2 12s4.48 10 10 10 10-4.480 10-10S17.52 2 12 2zm0 18c-4.41 0-8-3.59-8-8s3.59-8 8-8 8 3.590 8 8-3.59 8-8 8z"/></svg>
<div class="t" id="letsblock" style="left:1357px;top:427.6px;font-size:20.5px;letter-spacing:0.62px;color:#0e101a">Let’s block <span style="color:#8390a8;font-weight:bold;text-decoration:line-through;text-decoration-thickness:2px">leads</span> <b>lead</b> leakage in...</div>
<div class="a" style="left:1356px;top:477px;width:98px;height:47.5px;border-radius:6px;background:#027e6f"></div>
<div class="t" id="accept" style="left:1356px;top:490.5px;width:98px;text-align:center;font-size:21.5px;font-weight:bold;letter-spacing:0.45px;text-indent:0.45px;color:#fff">Accept</div>
<div class="t" id="dismiss" style="left:1478.5px;top:490.4px;font-size:21.5px;letter-spacing:-0.2px;color:#6b7794">Dismiss</div>
<div class="a" style="left:1592px;top:498px;width:5px;height:5px;border-radius:50%;background:#555"></div>
<div class="a" style="left:1599.5px;top:498px;width:5px;height:5px;border-radius:50%;background:#555"></div>
<div class="a" style="left:1607px;top:498px;width:5px;height:5px;border-radius:50%;background:#555"></div>
<div class="a" style="left:1356px;top:555px;width:409px;height:1px;background:#dcdcdc"></div>
<!-- card 2 -->
<div class="a" style="left:1359px;top:586px;width:36px;height:36px;border-radius:50%;background:#fde9ed"></div>
<svg style="left:1369px;top:594px" width="16" height="20" viewBox="0 0 18 22"><path d="M9 0.3Q5 1.8 1 1.3V9.5C1 14.5 4.5 19 9 21.7z" fill="#e8375a"/><path d="M9 0.3Q13 1.8 17 1.3V9.5C17 14.5 13.5 19 9 21.7z" fill="#fcc3cf"/></svg>
<div class="t gsub" style="left:1413.5px;top:579.7px;letter-spacing:0.59px">Use the right word</div>
<div class="t gmain" style="left:1413.5px;top:604.5px;letter-spacing:0.93px">after hour</div>
<div class="a" style="left:1356px;top:652px;width:409px;height:1px;background:#dcdcdc"></div>
<!-- card 3 -->
<div class="a" style="left:1359px;top:682.5px;width:36px;height:36px;border-radius:50%;background:#e8f0fe"></div>
<svg style="left:1368px;top:692px" width="18" height="18" viewBox="0 0 18 18"><defs><clipPath id="cc"><circle cx="9" cy="9" r="9"/></clipPath></defs><circle cx="9" cy="9" r="9" fill="#c5daf9"/><path clip-path="url(#cc)" d="M0 7.5C2.5 5.5 5 5.2 8 7.2S13.5 10.5 18 8V18H0z" fill="#4a86f7"/></svg>
<div class="t gsub" style="left:1413.5px;top:676.8px;letter-spacing:0.54px">Improve your text</div>
<div class="t gmain" style="left:1413.5px;top:701.6px;letter-spacing:0.75px">Foremost, congratulations on...</div>
<div class="a" style="left:1356px;top:749px;width:409px;height:1px;background:#dcdcdc"></div>
<!-- card 4 (clipped) -->
<div class="a" style="left:1332px;top:760px;width:456px;height:34px;overflow:hidden">
<div class="a" style="left:27px;top:19px;width:36px;height:36px;border-radius:50%;background:#fde9ed"></div>
<svg style="left:37px;top:27px" width="16" height="20" viewBox="0 0 18 22"><path d="M9 0.3Q5 1.8 1 1.3V9.5C1 14.5 4.5 19 9 21.7z" fill="#e8375a"/><path d="M9 0.3Q13 1.8 17 1.3V9.5C17 14.5 13.5 19 9 21.7z" fill="#fcc3cf"/></svg>
<div class="t gsub" style="left:81.5px;top:13.8px;letter-spacing:0.63px">Correct word choice</div>
</div>
<!-- footer -->
<div class="a" style="left:1332px;top:794px;width:480px;height:84px;background:#f4f4f4;border-top:1px solid #dcdcdc"></div>
<div class="a" style="left:1357.2px;top:822px;width:2.6px;height:25.6px;background:#c4c4c4"></div><div class="a" style="left:1357.2px;top:845px;width:19.8px;height:2.6px;background:#c4c4c4"></div><div class="a" style="left:1359.5px;top:820px;width:21px;height:25px;background:linear-gradient(135deg,#f4f5f7,#e9ebef)"></div><svg style="left:1364.8px;top:827.5px" width="18.5" height="13.5" viewBox="0 0 18.5 13.5"><path fill="#027e6f" d="M4.1 0A4.1 4.1 0 0 1 8.2 4.6C8.2 9 5 12.5 0.4 13.5L0 12C2.2 11 3.5 9.8 4.1 8.2A4.1 4.1 0 0 1 4.1 0z"/><path fill="#027e6f" transform="translate(10.2 0)" d="M4.1 0A4.1 4.1 0 0 1 8.2 4.6C8.2 9 5 12.5 0.4 13.5L0 12C2.2 11 3.5 9.8 4.1 8.2A4.1 4.1 0 0 1 4.1 0z"/></svg>
<div class="t" id="plag" style="left:1404px;top:825px;font-size:21.5px;letter-spacing:0.39px;color:#0e101a">Check for plagiarism and AI text</div>
<!-- red annotation border -->
<div class="a" style="left:1321px;top:91px;width:529px;height:781px;border:4px solid #ef3a3b;border-radius:6px"></div>
</body></html>
